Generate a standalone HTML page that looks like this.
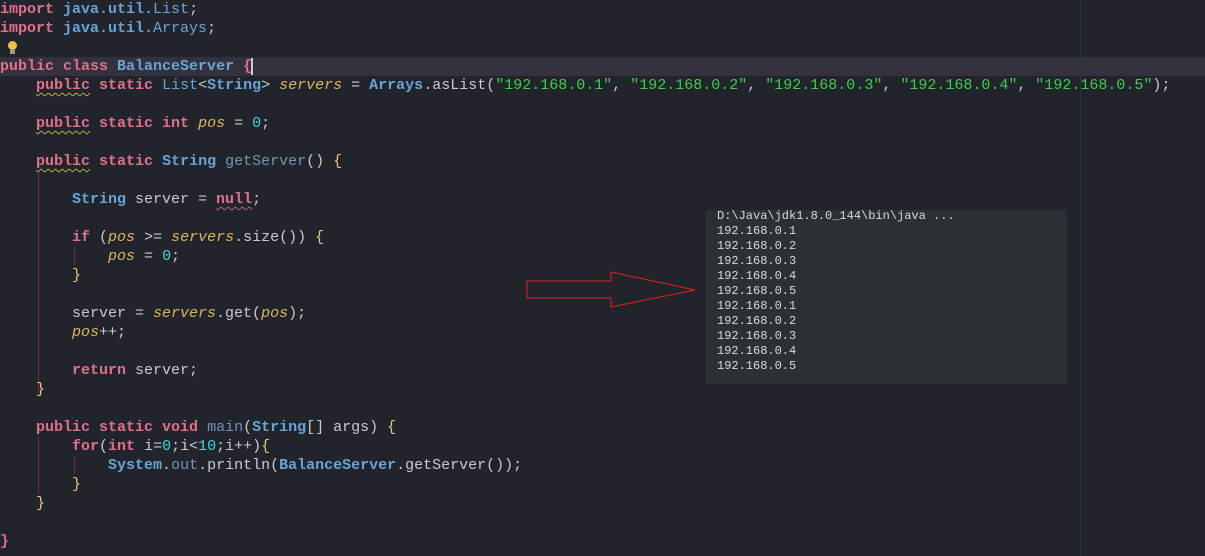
<!DOCTYPE html>
<html><head><meta charset="utf-8"><style>
html,body{margin:0;padding:0;}
body{width:1205px;height:556px;background:#21252b;position:relative;overflow:hidden;font-family:"Liberation Mono","DejaVu Sans Mono",monospace;}
.hl{position:absolute;left:0;top:57px;width:1205px;height:19px;background:#34313e;}
.margin{position:absolute;left:1080px;top:0;width:1px;height:556px;background:#2c3037;}
pre{position:absolute;left:0;top:0;margin:0;font-family:inherit;font-size:15px;line-height:19px;color:#c8ccd0;}
.k{color:#e2708c;font-weight:bold;}
.t{color:#6aa3d6;font-weight:bold;}
.c{color:#6aa3d6;}
.f{color:#e0b35e;font-style:italic;}
.n{color:#3fd6e0;}
.s{color:#3fcc4e;}
.m{color:#6f95b8;}
.b{color:#e8c87a;}
.w{text-decoration:underline wavy #b8b040;text-decoration-thickness:1px;text-underline-offset:3px;}
.wr{text-decoration:underline wavy #c06080;text-decoration-thickness:1px;text-underline-offset:3px;}
.g{position:absolute;width:1px;background:#7a2a44;}
.con{position:absolute;left:706px;top:210px;width:361px;height:174px;background:#2a3034;}
.con pre{left:11px;top:-1px;font-size:12px;line-height:15px;color:#d8dcdc;}
.cur{position:absolute;left:251px;top:58px;width:2px;height:17px;background:#c8ccd0;}
</style></head><body>
<div class="hl"></div>
<div class="margin"></div>
<div class="g" style="left:38px;top:171px;height:225px"></div>
<div class="g" style="left:74px;top:247px;height:18px"></div>
<div class="g" style="left:38px;top:437px;height:57px"></div>
<div class="g" style="left:74px;top:456px;height:18px"></div>
<pre><span class="k">import</span> <span class="t">java.util.</span><span class="c">List</span>;
<span class="k">import</span> <span class="t">java.util.</span><span class="c">Arrays</span>;

<span class="k">public class</span> <span class="t">BalanceServer</span> <span class="k">{</span>
    <span class="k w">public</span> <span class="k">static</span> <span class="c">List</span>&lt;<span class="t">String</span>&gt; <span class="f">servers</span> = <span class="t">Arrays</span>.asList(<span class="s">"192.168.0.1"</span>, <span class="s">"192.168.0.2"</span>, <span class="s">"192.168.0.3"</span>, <span class="s">"192.168.0.4"</span>, <span class="s">"192.168.0.5"</span>);

    <span class="k w">public</span> <span class="k">static int</span> <span class="f">pos</span> = <span class="n">0</span>;

    <span class="k w">public</span> <span class="k">static</span> <span class="t">String</span> <span class="m">getServer</span>() <span class="b">{</span>

        <span class="t">String</span> server = <span class="k wr">null</span>;

        <span class="k">if</span> (<span class="f">pos</span> &gt;= <span class="f">servers</span>.size()) <span class="b">{</span>
            <span class="f">pos</span> = <span class="n">0</span>;
        <span class="b">}</span>

        server = <span class="f">servers</span>.get(<span class="f">pos</span>);
        <span class="f">pos</span>++;

        <span class="k">return</span> server;
    <span class="b">}</span>

    <span class="k">public static void</span> <span class="m">main</span>(<span class="t">String</span>[] args) <span class="b">{</span>
        <span class="k">for</span>(<span class="k">int</span> i=<span class="n">0</span>;i&lt;<span class="n">10</span>;i++)<span class="b">{</span>
            <span class="t">System</span>.<span class="m">out</span>.println(<span class="t">BalanceServer</span>.getServer());
        <span class="b">}</span>
    <span class="b">}</span>

<span class="k">}</span></pre>
<div class="cur"></div>
<div style="position:absolute;left:8px;top:41px;width:9px;height:9px;border-radius:50%;background:#f0c040"></div>
<div style="position:absolute;left:10px;top:50px;width:5px;height:4px;background:#999"></div>
<div class="con"><pre>D:\Java\jdk1.8.0_144\bin\java ...
192.168.0.1
192.168.0.2
192.168.0.3
192.168.0.4
192.168.0.5
192.168.0.1
192.168.0.2
192.168.0.3
192.168.0.4
192.168.0.5</pre></div>
<svg style="position:absolute;left:0;top:0" width="1205" height="556"><polygon points="527,281 611,281 611,272 695,290 611,307 611,298 527,298" fill="none" stroke="#e02020" stroke-width="1"/></svg>
</body></html>
